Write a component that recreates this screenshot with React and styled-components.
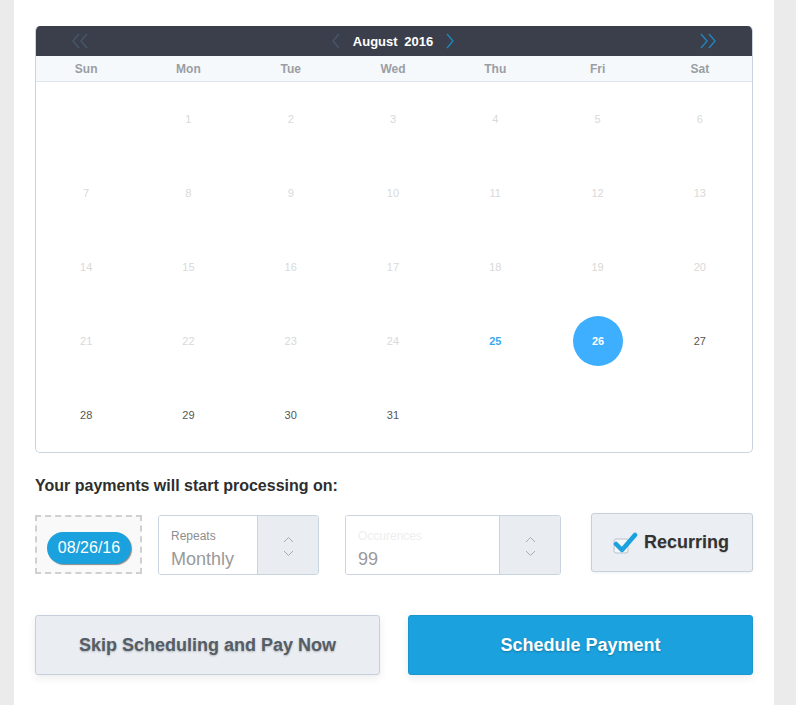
import React from "react";
import styled, { createGlobalStyle } from "styled-components";

const Global = createGlobalStyle`
  html, body { margin: 0; padding: 0; background: #ebebeb; }
  body { font-family: "Liberation Sans", Arial, Helvetica, sans-serif; }
`;

const Page = styled.div`
  min-height: 705px;
  display: flex;
`;

const Panel = styled.div`
  margin-left: 14px;
  width: 760px;
  background: #fff;
  box-sizing: border-box;
  padding: 26px 21px 30px;
`;

const Card = styled.div`
  border: 1px solid #c8d4df;
  border-top: none;
  border-radius: 5px;
  overflow: hidden;
`;

const Header = styled.div`
  height: 30px;
  background: #3a3f4b;
  display: flex;
  align-items: center;
  justify-content: space-between;
  padding: 0 34px 0 36px;
`;

const Center = styled.div`
  display: flex;
  align-items: center;
  gap: 9px;
  margin-left: -4px;
`;

const Title = styled.div`
  color: #fff;
  font-weight: bold;
  font-size: 13px;
  word-spacing: 3px;
  padding: 0 4px;
`;

const NavIcon = styled.svg`
  display: block;
  stroke: ${(p) => (p.$active ? "#1e86bd" : "#48566a")};
  fill: none;
  stroke-width: 1.4;
`;

const Weekdays = styled.div`
  display: grid;
  grid-template-columns: repeat(7, 1fr);
  height: 25px;
  background: #f5f9fc;
  border-bottom: 1px solid #dde6ee;
`;

const Weekday = styled.div`
  display: flex;
  align-items: center;
  justify-content: center;
  font-size: 12px;
  font-weight: bold;
  color: #9a9ea3;
  margin-left: -2px;
`;

const Days = styled.div`
  display: grid;
  grid-template-columns: repeat(7, 1fr);
  grid-auto-rows: 74px;
`;

const Day = styled.div`
  display: flex;
  align-items: center;
  justify-content: center;
  margin-left: -2px;
  font-size: 11px;
  color: ${(p) =>
    p.$kind === "past" ? "#d9d9d9" : p.$kind === "today" ? "#3aa9f0" : "#555"};
  font-weight: ${(p) => (p.$kind === "today" || p.$kind === "selected" ? "bold" : "normal")};
`;

const Selected = styled.span`
  width: 50px;
  height: 50px;
  border-radius: 50%;
  background: #3eaefe;
  color: #fff;
  display: flex;
  align-items: center;
  justify-content: center;
  margin-left: 1px;
`;

const Label = styled.div`
  margin-top: 24px;
  font-size: 16px;
  font-weight: bold;
  color: #2e2e2e;
`;

const Controls = styled.div`
  margin-top: 18px;
  display: flex;
  align-items: flex-start;
`;

const DateBox = styled.div`
  width: 107px;
  height: 59px;
  box-sizing: border-box;
  border: 2px dashed #d0d0d0;
  background: #f9f9f9;
  display: flex;
  align-items: center;
  padding: 6px 0 0 10px;
  margin-top: 2px;
`;

const Pill = styled.div`
  width: 84px;
  height: 32px;
  border-radius: 16px;
  background: #1ba1dd;
  color: #fff;
  font-size: 16px;
  display: flex;
  align-items: center;
  justify-content: center;
  box-shadow: 1px 1px 1px rgba(0, 0, 0, 0.45);
`;

const Select = styled.div`
  width: ${(p) => p.$w}px;
  height: 60px;
  margin-left: ${(p) => p.$ml}px;
  margin-top: 2px;
  box-sizing: border-box;
  border: 1px solid #c8d4df;
  border-radius: 3px;
  display: flex;
  overflow: hidden;
`;

const Field = styled.div`
  flex: 1;
  background: #fff;
  padding: 13px 0 0 12px;
`;

const FieldLabel = styled.div`
  font-size: 12px;
  color: ${(p) => (p.$faint ? "#eeeeee" : "#8e8e8e")};
`;

const FieldValue = styled.div`
  font-size: 18px;
  color: #9a9a9a;
  margin-top: 6px;
`;

const Stepper = styled.div`
  width: 60px;
  border-left: 1px solid #c8d4df;
  background: #e9edf2;
  display: flex;
  flex-direction: column;
  align-items: center;
  justify-content: center;
  gap: 7px;
  padding-top: 2px;
`;

const Recurring = styled.div`
  margin-left: 30px;
  width: 162px;
  height: 59px;
  box-sizing: border-box;
  border: 1px solid #c5d0da;
  border-radius: 3px;
  background: #ebeef2;
  display: flex;
  align-items: center;
  padding-left: 20px;
  gap: 6px;
  font-size: 18px;
  font-weight: bold;
  color: #333;
  text-shadow: 0 1px 1px rgba(0, 0, 0, 0.15);
  box-shadow: 0 1px 3px rgba(0, 0, 0, 0.06);
`;

const Buttons = styled.div`
  margin-top: 40px;
  display: flex;
  gap: 28px;
`;

const Button = styled.button`
  width: 345px;
  height: 60px;
  border-radius: 3px;
  font-family: inherit;
  font-size: 18px;
  font-weight: bold;
  cursor: pointer;
  border: 1px solid ${(p) => (p.$primary ? "#1a97cf" : "#c5d0dc")};
  background: ${(p) => (p.$primary ? "#1ba1dd" : "#eaeef2")};
  color: ${(p) => (p.$primary ? "#fff" : "#555d66")};
  text-shadow: 0 1px 2px rgba(0, 0, 0, 0.25);
  box-shadow: 0 3px 8px rgba(0, 0, 0, 0.08);
`;

const Chevron = ({ up }) => (
  <svg width="11" height="7" viewBox="0 0 11 7">
    <polyline
      points={up ? "1,6 5.5,1.5 10,6" : "1,1 5.5,5.5 10,1"}
      fill="none"
      stroke="#a3abb5"
      strokeWidth="1"
    />
  </svg>
);

const Nav = ({ dir, double, active }) => {
  const pts = (x) =>
    dir === "left" ? `${x + 6},1 ${x},8 ${x + 6},15` : `${x},1 ${x + 6},8 ${x},15`;
  return (
    <NavIcon $active={active} width={double ? 18 : 8} height="16" viewBox={`0 0 ${double ? 18 : 8} 16`}>
      <polyline points={pts(1)} />
      {double && <polyline points={pts(9)} />}
    </NavIcon>
  );
};

const weekdays = ["Sun", "Mon", "Tue", "Wed", "Thu", "Fri", "Sat"];

export default function App() {
  const cells = [null];
  for (let d = 1; d <= 31; d++) cells.push(d);
  while (cells.length < 35) cells.push(null);

  return (
    <Page>
      <Global />
      <Panel>
        <Card>
          <Header>
            <Nav dir="left" double />
            <Center>
              <Nav dir="left" />
              <Title>August 2016</Title>
              <Nav dir="right" active />
            </Center>
            <Nav dir="right" double active />
          </Header>
          <Weekdays>
            {weekdays.map((w) => (
              <Weekday key={w}>{w}</Weekday>
            ))}
          </Weekdays>
          <Days>
            {cells.map((d, i) => {
              if (!d) return <Day key={i} />;
              const kind = d < 25 ? "past" : d === 25 ? "today" : d === 26 ? "selected" : "future";
              return (
                <Day key={i} $kind={kind}>
                  {kind === "selected" ? <Selected>{d}</Selected> : d}
                </Day>
              );
            })}
          </Days>
        </Card>

        <Label>Your payments will start processing on:</Label>

        <Controls>
          <DateBox>
            <Pill>08/26/16</Pill>
          </DateBox>
          <Select $w={161} $ml={16}>
            <Field>
              <FieldLabel>Repeats</FieldLabel>
              <FieldValue>Monthly</FieldValue>
            </Field>
            <Stepper>
              <Chevron up />
              <Chevron />
            </Stepper>
          </Select>
          <Select $w={216} $ml={26}>
            <Field>
              <FieldLabel $faint>Occurences</FieldLabel>
              <FieldValue>99</FieldValue>
            </Field>
            <Stepper>
              <Chevron up />
              <Chevron />
            </Stepper>
          </Select>
          <Recurring>
            <svg width="26" height="24" viewBox="0 0 26 24">
              <rect x="2" y="8" width="14" height="14" rx="2" fill="#f4f6f8" stroke="#b9c3cd" />
              <polyline
                points="4,13 10,19 23,4"
                fill="none"
                stroke="#1ba1dd"
                strokeWidth="4.5"
                strokeLinecap="round"
                strokeLinejoin="round"
              />
            </svg>
            Recurring
          </Recurring>
        </Controls>

        <Buttons>
          <Button>Skip Scheduling and Pay Now</Button>
          <Button $primary>Schedule Payment</Button>
        </Buttons>
      </Panel>
    </Page>
  );
}
